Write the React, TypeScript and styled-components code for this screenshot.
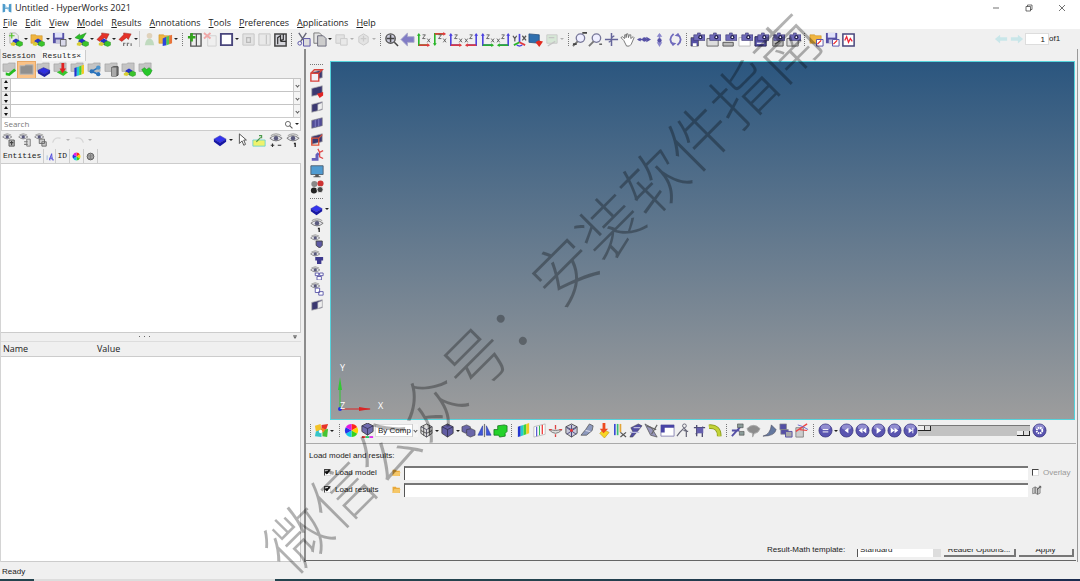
import React from "react";
import styled, { createGlobalStyle } from "styled-components";

const Global = createGlobalStyle`
  *, *::before, *::after { box-sizing: border-box; }
  body { margin: 0; background: #f0f0f0; color: #222; font: 9px/12px "Open Sans", "Noto Sans", sans-serif; }
  button, input, select { font: inherit; color: inherit; border-radius: 0; }
`;

/* ---------- page frame ---------- */
const Page = styled.div`
  position: relative;
  display: flex;
  flex-direction: column;
  min-height: 100vh;
  overflow: hidden;
`;
const TitleBar = styled.header`
  display: flex;
  align-items: center;
  gap: 3px;
  height: 15px;
  padding: 0 10px 0 2px;
  background: #fff;
`;
const Title = styled.h1`
  flex: 1;
  margin: 0;
  font-size: 9px;
  font-weight: 400;
`;
const WindowButtons = styled.div`
  display: flex;
  gap: 17px;
`;
const MenuBar = styled.nav`
  display: flex;
  gap: 8px;
  height: 14px;
  padding: 1px 3px 0;
  align-items: center;
  background: #fff;
`;
const MenuItem = styled.button`
  padding: 0;
  border: 0;
  background: none;
  white-space: nowrap;
  &::first-letter { text-decoration: underline; }
`;
const Bar = styled.div<{ $h: number; $start?: number }>`
  display: flex;
  flex: none;
  align-items: center;
  height: ${(p) => p.$h}px;
  padding-left: ${(p) => p.$start ?? 0}px;
`;
const Spacer = styled.div`
  flex: 1;
`;
const IconButton = styled.button<{ $w?: number; $active?: boolean; $dim?: boolean }>`
  display: flex;
  flex: none;
  align-items: center;
  justify-content: center;
  width: ${(p) => p.$w ?? 16}px;
  height: 16px;
  padding: 0;
  border: 0;
  background: ${(p) => (p.$active ? "#f9c288" : "none")};
  outline: ${(p) => (p.$active ? "1px solid #e8a866" : "none")};
  opacity: ${(p) => (p.$dim ? 0.35 : 1)};
`;
const CaretBox = styled.span<{ $w: number; $dim?: boolean }>`
  display: flex;
  flex: none;
  justify-content: center;
  width: ${(p) => p.$w}px;
  opacity: ${(p) => (p.$dim ? 0.3 : 1)};
  &::after {
    content: "";
    border: 2px solid transparent;
    border-top-color: #222;
    margin-top: 2px;
  }
`;
const Grip = styled.span<{ $w?: number }>`
  display: flex;
  flex: none;
  justify-content: center;
  width: ${(p) => p.$w ?? 6}px;
  height: 13px;
  &::after {
    content: "";
    border-left: 1px dotted #777;
  }
`;
const HGrip = styled.span`
  flex: none;
  width: 13px;
  height: 1px;
  margin: 3px 0 2px;
  border-top: 1px dotted #777;
`;
const Separator = styled.span`
  flex: none;
  width: 2px;
  height: 16px;
  border-left: 1px solid #ccc;
`;
const PageField = styled.input`
  width: 24px;
  height: 12px;
  padding: 0 3px;
  border: 1px solid #ddd;
  background: #fff;
  text-align: right;
  font: 8px/10px "Liberation Sans", Arial, sans-serif;
`;
const PageTotal = styled.label`
  width: 31px;
  font: 8px/10px "Liberation Sans", Arial, sans-serif;
`;
const Main = styled.main`
  display: flex;
  flex: 1;
`;

/* ---------- browser panel ---------- */
const Browser = styled.aside`
  display: flex;
  flex-direction: column;
  flex: 0 0 304px;
  padding-right: 3px;
  border-left: 1px solid #d4d4d4;
`;
const Tabs = styled.div`
  display: flex;
  height: 12px;
  padding-top: 1px;
  font: 8px/11px "Liberation Mono", monospace;
`;
const Tab = styled.button<{ $on?: boolean }>`
  padding: 0 4px 0 1px;
  margin-right: 2px;
  border: 0;
  border-right: ${(p) => (p.$on ? "1px solid #ccc" : "0")};
  background: ${(p) => (p.$on ? "#f8f8f8" : "none")};
`;
const PickRow = styled.div`
  display: flex;
  height: 13px;
  border: 1px solid #c4c4c4;
  border-bottom: 0;
  background: #fff;
`;
const Stepper = styled.button`
  display: flex;
  flex-direction: column;
  align-items: center;
  justify-content: space-between;
  width: 9px;
  padding: 1px 0;
  border: 0;
  border-right: 1px solid #c4c4c4;
  background: #eee;
  &::before { content: ""; border: 2px solid transparent; border-top: 0; border-bottom: 3px solid #111; }
  &::after { content: ""; border: 2px solid transparent; border-bottom: 0; border-top: 3px solid #111; }
`;
const PickSelect = styled.select`
  flex: 1;
  min-width: 0;
  appearance: none;
  border: 0;
  background: none;
`;
const DropEdge = styled.span`
  display: flex;
  align-items: center;
  justify-content: center;
  width: 7px;
  border-left: 1px solid #ccc;
  background: #f4f4f4;
  &::after { content: ""; width: 3px; height: 3px; border: solid #555; border-width: 0 1px 1px 0; transform: rotate(45deg); }
`;
const SearchRow = styled.div`
  display: flex;
  align-items: center;
  height: 14px;
  border: 1px solid #ccc;
  background: #fff;
`;
const SearchInput = styled.input`
  flex: 1;
  min-width: 0;
  padding: 0 2px;
  border: 0;
  background: none;
  font-size: 8px;
  &::placeholder { color: #777; opacity: 1; }
`;
const ColumnTable = styled.table<{ $mono?: boolean }>`
  width: 100%;
  height: 14px;
  flex: none;
  table-layout: fixed;
  border-collapse: collapse;
  font: ${(p) => (p.$mono ? '8px/12px "Liberation Mono", monospace' : '9px/12px "Open Sans", sans-serif')};
  th {
    height: 14px;
    padding: 0 0 0 2px;
    font-weight: 400;
    text-align: left;
    border-right: ${(p) => (p.$mono ? "1px solid #ccc" : "0")};
  }
  th:last-child { border: 0; }
  svg { display: block; }
`;
const Th = styled.th<{ $w?: number }>`
  width: ${(p) => (p.$w ? p.$w + "px" : "auto")};
`;
const Blank = styled.div<{ $grow: number }>`
  flex: ${(p) => p.$grow} 0 0;
  border: 1px solid #ccc;
  border-left: 0;
  background: #fff;
`;
const Splitter = styled.div`
  display: flex;
  align-items: center;
  height: 9px;
  padding-right: 3px;
  border-bottom: 1px solid #ddd;
`;
const Dots = styled.span`
  display: flex;
  justify-content: space-between;
  flex: 0 0 11px;
  &::before, &::after { content: ""; width: 1px; height: 1px; background: #666; }
`;
const Dot = styled.span`
  width: 1px;
  height: 1px;
  background: #666;
`;
const SplitHalf = styled.div`
  display: flex;
  flex: 1;
  justify-content: flex-end;
`;

/* ---------- work area ---------- */
const Work = styled.section`
  display: flex;
  flex-direction: column;
  flex: 1;
  min-width: 0;
  margin-right: 2px;
  border-left: 2px solid #8c8c8c;
  border-right: 1px solid #999;
`;
const Stage = styled.div`
  display: flex;
  flex: 1;
  padding: 12px 2px 0 0;
`;
const SideTools = styled.div`
  display: flex;
  flex-direction: column;
  align-items: center;
  width: 24px;
  padding-right: 3px;
`;
const SideRow = styled.div`
  display: flex;
  align-items: center;
  padding-left: 4px;
`;
const Viewport = styled.div`
  display: flex;
  flex: 1;
  align-items: flex-end;
  border: 1px solid #55d3dc;
  background: linear-gradient(#2b567f, #9d9d9d);
  svg { display: block; }
`;
const ColorSelect = styled.select`
  appearance: none;
  width: 37px;
  height: 13px;
  padding: 0 0 0 2px;
  border: 1px solid #ddd;
  border-right: 0;
  background: #fff;
  font: 8px/11px "Liberation Sans", Arial, sans-serif;
`;
const SelectEdge = styled(DropEdge)`
  width: 6px;
  height: 13px;
`;
const Sliders = styled.div`
  display: flex;
  flex-direction: column;
  width: 112px;
  height: 11px;
  border-top: 1px solid #777;
  background: #c2c2c2;
`;
const Range = styled.input`
  appearance: none;
  width: 100%;
  height: 5px;
  margin: 0;
  background: none;
  &::-webkit-slider-thumb {
    appearance: none;
    width: 13px;
    height: 5px;
    border: solid #222;
    border-width: 0 1px 1px 0;
    background: linear-gradient(90deg, #eee 6px, #444 6px, #444 7px, #ddd 7px);
  }
`;
const Panel = styled.form`
  display: flex;
  flex-direction: column;
  height: 118px;
  margin: 2px 1px 1px 0;
  padding: 6px 2px 0 3px;
  border-top: 1px solid #aaa;
  border-bottom: 1px solid #666;
  font: 8px/12px "Liberation Sans", Arial, sans-serif;
`;
const PanelTitle = styled.h2`
  margin: 0 0 2px;
  font: inherit;
`;
const LoadRow = styled.div`
  display: flex;
  align-items: center;
  height: 17px;
  padding-left: 15px;
`;
const Check = styled.input`
  appearance: none;
  display: flex;
  align-items: center;
  justify-content: center;
  flex: none;
  width: 7px;
  height: 7px;
  margin: 0 4px 0 0;
  border: 1px solid #444;
  border-right-color: #ddd;
  border-bottom-color: #ddd;
  background: #fff;
  &:checked::before {
    content: "";
    width: 5px;
    height: 3px;
    margin-top: -2px;
    border: solid #111;
    border-width: 0 0 2px 2px;
    transform: rotate(-45deg);
  }
`;
const LoadLabel = styled.label`
  width: 53px;
`;
const PathInput = styled.input`
  flex: 1;
  min-width: 0;
  height: 14px;
  border: 0;
  border-top: 2px solid #777;
  border-left: 1px solid #555;
  background: #fff;
`;
const RowEnd = styled.div`
  display: flex;
  align-items: center;
  width: 46px;
  padding-left: 4px;
  color: #999;
`;
const ActionRow = styled.div`
  display: flex;
  align-items: flex-end;
  justify-content: flex-end;
  margin-bottom: 3px;
`;
const TemplateLabel = styled.label`
  width: 90px;
  margin-bottom: 1px;
`;
const Cut = styled.div`
  display: flex;
  align-items: flex-end;
  gap: 3px;
  height: 8px;
  overflow: hidden;
`;
const TemplateSelect = styled.select`
  appearance: none;
  width: 84px;
  height: 14px;
  padding: 0 2px;
  border: 0;
  border-left: 1px solid #555;
  border-right: 8px solid #ddd;
  background: #fff;
`;
const PushButton = styled.button<{ $w: number }>`
  width: ${(p) => p.$w}px;
  height: 15px;
  padding: 3px 0 0;
  border: solid #777;
  border-width: 0 2px 2px 0;
  background: #f0f0f0;
  line-height: 10px;
`;
const StatusBar = styled.footer`
  height: 17px;
  padding: 4px 2px;
  font: 8px/12px "Liberation Sans", Arial, sans-serif;
`;
const DesktopEdge = styled.div`
  height: 2px;
  background: linear-gradient(90deg, #24434e 34px, #ddd 34px, #ddd 275px, #24434e 275px, #24434e 50%, #1c2c50);
`;
const Watermark = styled.div`
  position: absolute;
  left: 50%;
  top: 50%;
  transform: translate(-50%, -50%) rotate(-45deg);
  color: rgba(0, 0, 0, 0.3);
  font: 300 63px/64px "Noto Sans CJK SC", sans-serif;
  white-space: nowrap;
  pointer-events: none;
`;

/* ---------- drawings, all on a 16-unit grid ---------- */
const P = "#5550a5";
const path = (d: string, fill: string, stroke = "none", w = 1) => <path d={d} fill={fill} stroke={stroke} strokeWidth={w} />;
const line = (d: string, c: string, w = 1.3) => path(d, "none", c, w);
const blocks = (
  <>
    {path("M5 9l3.500-2 3.500 2v3l-3 2-4-2z", "#2432c8")}
    {path("M9 11l3-1.500 3.500 1.500v3l-3 1.500-3.500-1.500z", "#3ac42c", "#1f7d18", 0.4)}
    {path("M3 12l3-1.500 3 2-2.500 2.500-3.500-1z", "#d8cf36")}
  </>
);
const folder = path("M1 3h5l1 1h6v8H1z", "#f0b540", "#c98f26", 0.6);
const disk = (
  <>
    {path("M1 1h12v11H1z", P)}
    {path("M3 1h8v5H3z", "#dfe0fa")}
    {path("M4 8h6v4H4z", "#c4c4dd")}
  </>
);
const camera = (
  <>
    {path("M4 3h4V1h3v2h5v6H4z", "#706bb9", "#37336e", 0.6)}
    <circle cx="11" cy="5.500" r="2.200" fill="#23204f" />
    <circle cx="11" cy="5.500" r="0.900" fill="#fff" />
  </>
);
const greyFolder = path("M1 2h5l1-1h7v9H1z", "#c4c4c4", "#999", 0.6);
const eye = (
  <>
    {path("M1 6q6-6 14 0q-7 6-14 0z", "#e4e4ea", "#777", 1.1)}
    <circle cx="8" cy="6" r="2.500" fill="#59597c" />
    {line("M2 3q6-4 12 0", "#888", 1)}
  </>
);
const smallEye = <g transform="scale(.75)">{eye}</g>;
const slab = path("M2 5l12-3v9L2 14z", "#3b3870", "#aaa", 0.8);
const ball = (
  <>
    <circle cx="8" cy="8" r="7" fill="#5a55b0" stroke="#3b377f" strokeWidth="0.800" />
    <ellipse cx="8" cy="4.500" rx="5" ry="2.800" fill="#a8a5de" opacity="0.700" />
  </>
);
const wheel = (
  <>
    {["#ff2a1a", "#ffd400", "#37d21b", "#14c9e6", "#2634e8", "#e11be0"].map((c, i) => (
      <path key={c} d="M8 8V1A7 7 0 0 1 14.060 4.500z" fill={c} transform={`rotate(${i * 60} 8 8)`} />
    ))}
  </>
);
const cube = (c: string) => (
  <>
    {path("M8 1l6 3v7l-6 4-6-4V4z", c, "#333", 0.8)}
    {line("M2 4l6 3 6-3M8 7v8", "#26243f", 0.7)}
  </>
);
const axes = (v: string, h: string, flipX = false, flipY = false) => (
  <>
    <g transform={`translate(${flipX ? 16 : 0} ${flipY ? 16 : 0}) scale(${flipX ? -1 : 1} ${flipY ? -1 : 1})`}>
      {line("M3 3v11h9", v, 1.7)}
      {path("M1 4l2-3 2 3z", v)}
      {line("M3 14h10", h, 1.7)}
      {path("M12 12l3 2-3 2z", h)}
    </g>
    {line(flipX ? "M6 3h3l-3 4h3M1 7l3 4M4 7l-3 4" : "M7 3h3l-3 4h3M12 7l3 4M15 7l-3 4", "#555", 0.9)}
  </>
);
const rainbow = (
  <>
    {path("M2 4l3-1v11l-3 1z", "#2335cf")}
    {path("M5 3l3-1v11l-3 1z", "#24c9d2")}
    {path("M8 2l3-1v11l-3 1z", "#3fd43a")}
    {path("M11 1l3-1v11l-3 1z", "#f2cb24")}
  </>
);
const mag = (
  <>
    <circle cx="9" cy="6.500" r="4.500" fill="#eef" stroke="#777799" strokeWidth="1.400" />
    {line("M6 10l-5 5", "#777", 2)}
  </>
);

const glyphs: Record<string, React.ReactNode> = {
  new: <>{path("M2 1h6l3 3v8H2z", "#ececec", "#999", 0.7)}{line("M4 1v6M1 4h6", "#53c32b")}{blocks}</>,
  open: <>{folder}{blocks}</>,
  save: <>{disk}{path("M9 8h6v7H9z", "#d8d8e8", "#444", 0.8)}</>,
  import: <>{path("M1 6l5-4v2l7-3-5 8-3 1 1-2z", "#2bbd26", "#178315", 0.5)}{blocks}</>,
  export: <>{path("M1 8l5-5V1l8 1-3 6-2-2-5 4z", "#e53229", "#982019", 0.5)}{blocks}</>,
  exportDoc: <>{path("M1 8l5-5V1l8 1-3 6-2-2-5 4z", "#e53229", "#982019", 0.5)}{line("M6 15v-3h2M10 15v-3h2M14 12v3", "#777")}</>,
  user: <><circle cx="8" cy="4" r="3" fill="#c39b5c" />{path("M3 14q1-7 5-7t5 7z", "#69b365")}</>,
  session: <>{folder}{path("M5 7l4-2v9l-4 1z", "#2c45dd")}{path("M9 5l3-1v9l-3 1z", "#4cc955")}{path("M12 4l3-1v9l-3 1z", "#e8733a")}</>,
  addPage: <>{path("M4 2h11v13H4z", "#eee", "#555", 1.4)}{line("M10 2v13", "#555")}{line("M5 1v9M1 5.500h8", "#33a51d", 2.6)}</>,
  removePage: <>{path("M5 4h9v11H5z", "#eee", "#999")}{line("M1 1l7 6M8 1L1 7", "#e22", 2)}</>,
  layout: path("M2 2h12v12H2z", "#fff", "#49467c", 2),
  copyPage: <>{path("M2 2h12v12H2z", "#ccc", "#777")}{line("M6 6h4v5H6z", "#555")}</>,
  pastePage: <>{path("M2 2h12v12H2z", "#ddd", "#777")}{line("M10 3v10", "#777")}</>,
  swap: <>{path("M2 2h12v13H2z", "#d6d6dc", "#444", 1.6)}{line("M5 13V6l3-2v5l3-1V2M8 10h6", "#333")}</>,
  cut: <>{line("M3 1l6 9M11 1L5 10", "#667", 1.5)}<circle cx="4" cy="12" r="2" fill="none" stroke={P} />{path("M8 7h7v8H8z", "#ddd", P)}</>,
  copy: <>{path("M2 1h6l2 2v9H2z", "#e4e4e4", "#777")}{path("M6 4h6l3 3v8H6z", "#ccc", "#667")}</>,
  paste: <>{path("M2 3h9v9H2z", "#ccc", "#888")}{path("M7 7h7v7H7z", "#ddd", "#888")}</>,
  overlay: <>{path("M3 5l5-3 5 3v6l-5 3-5-3z", "#ccc", "#888")}{line("M8 4v6M5 7h6", "#888")}</>,
  fit: <><circle cx="7" cy="7" r="5" fill="#ccd" stroke="#555" strokeWidth="1.500" />{line("M3 7h8M7 3v8M11 11l4 4", "#444", 1.6)}</>,
  back: path("M1 8l7-7v4h7v6H8v4z", "#817cc5", "#a9a7c9", 0.9),
  xy: axes("#27b526", "#e2393b"),
  xyBack: axes("#27b526", "#e2393b", false, true),
  zx: axes("#4b41df", "#e2393b"),
  xz: axes("#4b41df", "#e2393b", true),
  zy: axes("#4b41df", "#27b526"),
  yz: axes("#4b41df", "#27b526", true),
  iso: <>{line("M8 2v9", "#4b41df", 1.8)}{line("M8 11l-6 3", "#27b526", 1.8)}{line("M8 11l6 3", "#e2393b", 1.8)}{line("M1 4l2 3 2-3M3 7v3M11 4l4 5M15 4l-4 5", "#555")}{line("M5 14l3 1 3-1", "#4b41df")}</>,
  view: <>{path("M1 2l11 1v9L1 11z", "#2f6fae", "#234c79", 0.8)}{path("M8 11l3-2 5 1-4 6z", "#e22b20")}</>,
  report: <>{path("M3 3h11v9H3z", "#a8d8a8", "#888")}{line("M4 15l8-5M5 6h6", "#777")}</>,
  zoomIn: <>{mag}{line("M11 1h5M1 13h4", "#444", 1.8)}</>,
  zoom: <>{mag}{line("M12 13h3", "#444")}</>,
  pan: <>{line("M1 8h14M8 1v14", "#65659a", 1.6)}{line("M11 4l-3 2M5 11l3-2", "#65659a")}</>,
  hand: path("M4 9L1 6l1.500-1L5 7V3h1.500v3L7 2h1.500l.5 4 1-3h1.500v4L14 5l1 1-3 7-2 2H7z", "#fff", "#666", 0.9),
  spinH: <>{line("M2 8h12", P, 1.6)}{path("M11 5l5 3-5 3zM5 6L1 8l4 2z", P)}<circle cx="9" cy="8" r="2.300" fill={P} /></>,
  spinV: <>{line("M8 2v12", "#8b87cc", 1.6)}{path("M5 5l3-4 3 4zM5 11l3 5 3-5z", "#8b87cc")}<circle cx="8" cy="9" r="2.300" fill={P} /></>,
  spin: <>{line("M6 2q-7 6 0 12M10 2q7 6 0 12", "#706bbd", 2)}{path("M4 11l5 1-4 3zM12 5L7 4l4-3z", "#706bbd")}</>,
  cam1: <>{path("M1 6h8v9H1z", P, "#333", 0.6)}{camera}{path("M3 12h4v3H3z", "#fff")}</>,
  cam2: <>{path("M1 7h12v8H1z", "#ddd", "#666")}{camera}</>,
  cam3: <>{path("M1 11h11v4H1z", "#bbb", "#555")}{camera}</>,
  cam4: <>{path("M1 6h12v9H1z", "#fff", "#bbb")}{camera}</>,
  cam5: <>{path("M1 5h12v10H1z", P, "#26244f")}{camera}{line("M3 12h8", "#fff")}</>,
  cam6: <>{path("M3 6h11v9H3z", "#bbb", "#555")}{camera}{line("M5 13l6-4", "#444")}</>,
  folderPic: <>{folder}{path("M8 8h7v7H8z", "#fff", P)}{line("M9 13l4-4", "#e22")}</>,
  savePic: <>{disk}{path("M8 8h7v7H8z", "#fff", P)}{line("M9 13l4-4", "#e22")}</>,
  chart: <>{path("M2 2h12v13H2z", "#fff", "#49467c", 1.6)}{line("M4 9l2-4 2 6 2-4 2 3", "#e23")}</>,
  prev: path("M1 8l6-5v3h8v4H7v3z", "#c9e6e9"),
  next: path("M15 8L9 3v3H1v4h8v3z", "#c9e6e9"),

  fCheck: <>{greyFolder}{path("M4 11l3 1 6-5 2 2-7 6-4-1z", "#27bd22")}</>,
  fGrey: path("M1 4h5l1-1h8v10H1z", "#8f8f8f", "#bbb"),
  fBlue: <>{greyFolder}{path("M2 9l6-3 7 3-6 4z", "#2f2fe0", "#1a1a9b", 0.6)}{path("M2 9v3l7 4 6-4V9l-6 4z", "#2020a6")}</>,
  fLoad: <>{greyFolder}{path("M4 11l6-3 6 3-5 4z", "#38c530")}{path("M9 1h3v6h2l-4 5-3-5h2z", "#e12222")}</>,
  fRain: <>{greyFolder}<g transform="translate(3 3) scale(.85)">{rainbow}</g></>,
  fShare: <>{greyFolder}{line("M5 10l7-4M5 10l7 3", "#2b73bb", 1.8)}<circle cx="5" cy="10" r="2.300" fill="#2b73bb" /><circle cx="12" cy="6" r="2.300" fill="#4b93cc" /><circle cx="12" cy="13" r="2.300" fill="#2b73bb" /></>,
  fBook: <>{greyFolder}{path("M8 6l2-1h5v9l-2 1H8z", "#777", "#444")}{path("M8 6h5v9H8z", "#aaa")}</>,
  fParts: <>{greyFolder}{blocks}</>,
  fGreen: <>{greyFolder}{path("M4 8l3-2 2 2 3-2 3 3-2 4-3 2-3-2z", "#27c72a", "#158415", 0.5)}</>,

  treeEye: <>{smallEye}{path("M8 8h6v7H8z", "#bbb", "#555")}{line("M9 11h4M11 9v5", "#444")}</>,
  treeEye2: <>{smallEye}{path("M10 7h4v8h-4z", "#ddd", "#777")}{line("M7 10h4M7 13h4", "#777")}</>,
  treeEye3: <>{smallEye}{path("M6 7h6v5H6zM9 10h5v5H9z", "#ccc", "#666")}</>,
  undo: line("M3 11q2-7 9-5", "#aaa", 1.5),
  redo: line("M4 6q7-2 9 5", "#aaa", 1.5),
  block: <>{path("M1 7l7-4 7 4-7 4z", "#3434ee", "#1c1c99", 0.5)}{path("M1 7v3l7 5 7-5V7l-7 4z", "#1717a4")}</>,
  cursor: path("M5 1v11l3-3 2 5 2-1-2-5h3z", "#fff", "#444"),
  highlight: <>{path("M1 8h14v7H1z", "#eff26b", "#69d3cf", 1)}{line("M5 10l5-5M8 3h3v3", "#4a994a")}</>,
  eyePM: <>{eye}{line("M2 14h4M4 12v4M10 14h4", "#333")}</>,
  eye1: <>{eye}{line("M9 12h1.500v4", "#222", 1.5)}</>,
  search: <><circle cx="7" cy="7" r="4.500" fill="none" stroke="#555" strokeWidth="1.500" />{line("M10 10l5 5", "#555", 1.8)}</>,
  info: <>{line("M10 3L6 14h2M10 3l1 11h3M6 11h6", "#4d48dc", 1.7)}{line("M2 6v8", "#9bd", 1.6)}</>,
  wheel,
  sphere: <><circle cx="8" cy="8" r="6" fill="#aaa" stroke="#555" strokeWidth="1.600" />{line("M3 7h10M8 3v10M5 11h6", "#777")}</>,
  pin: <>{path("M3 6h10l-5 7z", "#666")}{line("M3 4h10", "#555", 1.6)}</>,

  slabRed: <>{slab}{path("M1 6h9v9H1z", "#f3eef4")}{line("M1 6h9v9H1zM1 6l4-4h9l-4 4", "#d9433b", 1.6)}</>,
  slabCut: <>{slab}{path("M8 11l7-2v4l-4 3z", "#e02424")}</>,
  slabHalf: <>{slab}{path("M9 5l5-2v7l-5 2z", "#eee", "#bbb", 0.7)}</>,
  slab: <>{path("M2 5l12-3v9L2 14z", "#514c97", "#777", 0.7)}{line("M6 4v9M10 3v9", "#8e8bcf", 0.9)}</>,
  slabBox: <>{slab}{line("M2 7h8v8H2zM10 7l4-4", "#e05338", 1.5)}</>,
  hook: <>{line("M2 13h6V8l2-2", "#655fba", 3.4)}{line("M9 1l2 4 4-2M11 5v5l4 2", "#df4747", 1.4)}</>,
  monitor: <>{path("M1 2h14v10H1z", "#4f9bd1", "#4d5d6c")}{path("M6 12h4v2h2v1H4v-1h2z", "#555")}</>,
  balls: <><circle cx="5" cy="4.500" r="3.500" fill="#888" /><circle cx="12" cy="4" r="3.500" fill="#c33" /><circle cx="4.500" cy="12" r="3.500" fill="#222" /><circle cx="11.500" cy="11" r="3.500" fill="#444" stroke="#eee" /></>,
  eyeA: <>{smallEye}{path("M7 8h7v5l-3 3-4-3z", "#5d59a4", "#444")}</>,
  eyeB: <>{smallEye}{path("M6 8h9v4h-2v4H8v-4H6z", "#3d398e")}</>,
  eyeC: <>{smallEye}{path("M6 8h4v3H6zM11 8h4v3h-4zM8 12h5v4H8z", "#fff", P)}</>,
  eyeD: <>{smallEye}{path("M6 7h5v5H6zM10 11h5v4h-5z", "#fff", P)}</>,

  contourMix: <>{path("M1 3l6-2 1 7-6 1z", "#f2c227")}{path("M8 2l7-1-2 6-5 1z", "#e63428")}{path("M2 9l6-2v8l-7-1z", "#36c5c9")}{path("M9 8l6-2-1 9-5-1z", "#48c433")}{path("M9 5l3 2-2 3-4-1z", "#f28a1e")}<circle cx="7" cy="9" r="1.800" fill="#fff" /></>,
  cubeTint: <>{path("M8 0l6 3v6l-6 4-6-4V3z", "#706cae", "#333", 0.8)}{line("M2 3l6 3 6-3M8 6v7", "#26243f", 0.7)}{path("M2 14h4v2H2z", "#e33")}{path("M6 14h4v2H6z", "#2c6")}{path("M10 14h4v2h-4z", "#d3e")}</>,
  cubeWire: <>{cube("#ddd")}{line("M5 2.500v11M11 2.500v11M2 8l6 3 6-3", "#444", 0.9)}</>,
  cubeSolid: cube("#625da3"),
  cubes: <>{path("M1 4l5-2 4 2v5l-5 2-4-2z", "#6a66a8", "#333", 0.6)}{path("M6 7l5-1 4 2v5l-5 2-4-2z", "#6a66a8", "#333", 0.6)}</>,
  mirror: <>{path("M1 13L6 3v10zM15 13L10 3v10z", "#3f56d8", "#2333a0", 0.6)}{line("M8 1v14", "#777")}</>,
  greenBlocks: path("M1 7h4V3l7-1 3 1v6l-2 2v3l-6 1-1-2H1z", "#24d22a", "#14701a", 0.8),
  contour: rainbow,
  contour2: <>{path("M2 4l12-3v11L2 15z", "#fff", "#999", 0.6)}{line("M5 4v10", "#44c", 1.2)}{line("M8 3v10", "#3b5", 1.2)}{line("M11 2v10", "#e44", 1.5)}</>,
  deform: <>{path("M1 7q7 8 14 0q-7 2-14 0z", "#ddd", "#777")}{line("M1 7h3M12 7h3M8 12v3M8 2v5", "#d44", 1.4)}</>,
  iso3: <>{cube("#c8c8d8")}{line("M3 5l10 7M13 5L3 12M8 2v12", "#4d4980", 1)}<circle cx="8" cy="8" r="1.500" fill="#e33" /></>,
  beam: <>{path("M1 13h6l6-5 1-5-4-2-4 6z", "#8d99bd", "#555", 0.8)}{line("M6 8l5 1", "#dde", 1.2)}</>,
  arrowLoad: <>{path("M4 11l4-4 6 3-5 6z", "#f7d625", "#bb8f11", 0.6)}{path("M7 0h3v6h3l-5 5-4-5h3z", "#ed4b20")}</>,
  stripesCut: <>{line("M3 1v12", "#3b4bd5", 1.8)}{line("M6 1v12", "#3bbd72", 1.8)}{line("M9 1v9", "#e2a538", 1.8)}{line("M9 10l6 5M15 10l-6 5", "#555")}</>,
  trace: <>{path("M3 5l8-4 4 2-4 5-6 7H2l3-6z", "#524ea2", "#333", 0.5)}{line("M2 10h10M6 5h7", "#bbd")}</>,
  vec: <>{path("M1 1l7 4 6 10-7-2z", "#9795bb", "#555", 0.8)}{line("M3 3l10 4M14 2L8 12", "#666")}</>,
  tableIcon: <>{path("M1 2h14v12H1z", "#fff", "#8b88b5")}{path("M1 2h14v3H1zM1 5h4v5H1z", "#4743a4")}</>,
  run: <>{line("M8 5l3 3v7M8 6l-4 4-3 4M8 8l5 1", "#667", 1.3)}<circle cx="9" cy="3" r="2" fill="none" stroke="#667" /></>,
  cross: <>{line("M5 2v12M2 5h12M4 12l8-8M11 6v9", "#4c4a6e", 1.4)}{path("M5 5h7v6H5z", "#655fae")}</>,
  pipe: <>{line("M1 4q11-1 11 10", "#8c9c1e", 5)}{line("M1 4q11-1 11 10", "#c3d336", 3)}</>,
  note: <>{line("M2 8h8M2 14l10-11", P, 2)}{path("M8 1h6v4H8zM10 9h5v4h-5z", "#8b9c99", "#444", 0.6)}</>,
  bubble: path("M1 6q7-7 14 0q-2 5-6 5l-2 4v-4Q2 10 1 6z", "#8d8d8d", "#aaa"),
  swoosh: path("M1 14q8-2 9-12l5 5q-1 7-14 7z", "#64789f", "#445", 0.6),
  stack: <>{path("M2 1h7v6H2zM3 7h8v5H3z", P, "#888", 0.7)}{path("M8 9h7v6H8z", "#aaa", P)}</>,
  plot: <>{path("M2 5h8v10H2z", "#ccc", "#888")}{line("M2 9L14 1", "#e44", 1.5)}{line("M4 2q5 1 11 5", "#66c", 1)}{line("M6 7l8 1", "#e44")}</>,
  ballMenu: <>{ball}{line("M5 7h6M5 9.500h6", "#fff", 1)}</>,
  ballFirst: <>{ball}{path("M10 5v6L6 8z", "#fff")}</>,
  ballRew: <>{ball}{path("M8 5v6L4 8zM12 5v6L8 8z", "#fff")}</>,
  ballPlay: <>{ball}{path("M6 4.500v7l5-3.500z", "#fff")}</>,
  ballFwd: <>{ball}{path("M4 5v6l4-3zM8 5v6l4-3z", "#fff")}</>,
  ballLast: <>{ball}{path("M6 5v6l4-3zM10 5h1v6h-1z", "#fff")}</>,
  ballGear: <>{ball}<circle cx="8" cy="8" r="3" fill="none" stroke="#fff" strokeWidth="2" strokeDasharray="1.600 .8" /></>,
  folder: <>{path("M1 3h6l1 2h6v9H1z", "#e9a93a")}{path("M1 14l3-7h11l-2 7z", "#f5c768")}</>,
  map: <>{path("M1 5l4-2 4 2 4-2v10l-4 2-4-2-4 1z", "#ccc", "#666")}{line("M5 3v10M9 5v10M8 8l6-6M11 2h3v3", "#555")}</>,
  logo: <>{path("M1 1l4 1v5h6V2l4-1v14l-4-1V9H5v5l-4 1z", "#4e9bcb")}{path("M5 2l3 5H5zM11 14L8 9h3z", "#9cc9e4")}</>,
  min: line("M2 8h12", "#333", 1.4),
  max: line("M2 5h9v9H2zM5 5V2h9v9h-3", "#333", 1.4),
  close: line("M2 2l12 12M14 2L2 14", "#333", 1.4),
};

const Icon = ({ name, size = 15 }: { name: string; size?: number }) => (
  <svg width={size} height={size} viewBox="0 0 16 16" aria-hidden="true">
    {glyphs[name]}
  </svg>
);

type ToolsProps = { items: string; caret?: number; w?: number; size?: number; active?: string };
/* Items are icon names; a trailing "+" adds a drop-down caret, "~" shows the tool disabled. */
const Tools = ({ items, caret = 6, w, size = 15, active }: ToolsProps) => (
  <>
    {items.split(" ").map((raw, i) => {
      const name = raw.replace(/[+~]/g, "");
      const dim = raw.includes("~");
      return (
        <React.Fragment key={i}>
          <IconButton type="button" aria-label={name} $w={w} $dim={dim} $active={active === name}>
            <Icon name={name} size={size} />
          </IconButton>
          {raw.includes("+") && <CaretBox $w={caret} $dim={dim} />}
        </React.Fragment>
      );
    })}
  </>
);

const menus = ["File", "Edit", "View", "Model", "Results", "Annotations", "Tools", "Preferences", "Applications", "Help"];

export default function App() {
  return (
    <>
      <Global />
      <Page>
        <TitleBar>
          <Icon name="logo" size={10} />
          <Title>Untitled - HyperWorks 2021</Title>
          <WindowButtons>
            <Tools items="min max close" size={8} />
          </WindowButtons>
        </TitleBar>
        <MenuBar>
          {menus.map((m) => (
            <MenuItem key={m} type="button">{m}</MenuItem>
          ))}
        </MenuBar>
        <Bar $h={20} $start={1}>
          <Grip />
          <Tools items="new+ open+ save+ import+ export+ exportDoc+" />
          <Separator />
          <Tools items="user~ session+" />
          <Grip $w={7} />
          <Tools items="addPage removePage~ layout+ copyPage~ pastePage~ swap" />
          <Grip $w={7} />
          <Tools items="cut copy+ paste~+ overlay~+" />
          <Grip />
          <Tools items="fit back xy xyBack zx xz zy yz iso view report~+" />
          <Grip />
          <Tools items="zoomIn zoom pan hand spinH spinV spin" />
          <Grip />
          <Tools items="cam1 cam2 cam3 cam4 cam5 cam6 cam2" />
          <Grip $w={7} />
          <Tools items="folderPic savePic chart" />
          <Spacer />
          <Tools items="prev next" size={14} />
          <PageField id="page" defaultValue="1" />
          <PageTotal htmlFor="page">of1</PageTotal>
        </Bar>

        <Main>
          <Browser>
            <Tabs>
              <Tab type="button">Session</Tab>
              <Tab type="button" $on>Results×</Tab>
            </Tabs>
            <Bar $h={17}>
              <Tools items="fCheck fGrey fBlue fLoad fRain fShare fBook fParts fGreen" w={17} active="fGrey" />
            </Bar>
            {["Model", "Subcase", "Simulation"].map((n) => (
              <PickRow key={n}>
                <Stepper type="button" aria-label={n + " step"} />
                <PickSelect aria-label={n} />
                <DropEdge />
              </PickRow>
            ))}
            <SearchRow>
              <SearchInput placeholder="Search" aria-label="Search" />
              <Icon name="search" size={9} />
              <CaretBox $w={7} />
            </SearchRow>
            <Bar $h={18}>
              <Tools items="treeEye treeEye2 treeEye3 undo~+ redo~+" size={14} />
              <Spacer />
              <Tools items="block+" caret={5} size={14} />
              <Tools items="cursor highlight eyePM eye1" w={17} size={14} />
            </Bar>
            <ColumnTable $mono>
              <thead>
                <tr>
                  <Th $w={42}>Entities</Th>
                  <Th $w={12}><Icon name="info" size={9} /></Th>
                  <Th $w={14}>ID</Th>
                  <Th $w={14}><Icon name="wheel" size={9} /></Th>
                  <Th $w={14}><Icon name="sphere" size={9} /></Th>
                  <Th />
                </tr>
              </thead>
            </ColumnTable>
            <Blank $grow={170} />
            <Splitter>
              <SplitHalf><Dots><Dot /></Dots></SplitHalf>
              <SplitHalf><Icon name="pin" size={6} /></SplitHalf>
            </Splitter>
            <ColumnTable>
              <thead>
                <tr>
                  <Th $w={94}>Name</Th>
                  <Th>Value</Th>
                </tr>
              </thead>
            </ColumnTable>
            <Blank $grow={207} />
          </Browser>

          <Work>
            <Stage>
              <SideTools>
                <HGrip />
                <Tools items="slabRed slabCut slabHalf slab slabBox hook monitor balls" size={14} />
                <HGrip />
                <SideRow>
                  <Tools items="block" size={13} />
                  <CaretBox $w={4} />
                </SideRow>
                <Tools items="eye1 eyeA eyeB eyeC eyeD slabHalf" size={14} />
              </SideTools>
              <Viewport>
                <svg width="60" height="60" viewBox="0 0 60 60" role="img" aria-label="Axes">
                  <path d="M9 50V30" stroke="#2fc62f" />
                  <path d="M7 31l2-13 2 13z" fill="#35c735" />
                  <path d="M9 50h30" stroke="#d92525" />
                  <path d="M28 48l12 2-12 2z" fill="#d92525" />
                  <circle cx="9" cy="50" r="2" fill="#2430e0" />
                  <g fill="#fff" fontFamily="Open Sans, sans-serif" fontSize="9">
                    <text x="9" y="12">Y</text>
                    <text x="9" y="50">Z</text>
                    <text x="47" y="50">X</text>
                  </g>
                </svg>
              </Viewport>
            </Stage>
            <Bar $h={21} $start={1}>
              <Grip />
              <Tools items="contourMix+" />
              <Grip $w={8} />
              <Tools items="wheel cubeTint" />
              <ColorSelect aria-label="Color by"><option>By Comp</option></ColorSelect>
              <SelectEdge />
              <Tools items="cubeWire+ cubeSolid+ cubes mirror greenBlocks" caret={5} />
              <Grip $w={7} />
              <Tools items="contour contour2 deform iso3 beam arrowLoad stripesCut trace vec tableIcon run cross pipe" />
              <Grip />
              <Tools items="note bubble swoosh stack plot" />
              <Grip $w={8} />
              <Tools items="ballMenu+ ballFirst ballRew ballPlay ballFwd ballLast" caret={5} />
              <Sliders>
                <Range type="range" aria-label="Animation start" defaultValue={0} />
                <Range type="range" aria-label="Animation end" defaultValue={100} />
              </Sliders>
              <Tools items="ballGear" w={18} />
            </Bar>
            <Panel>
              <PanelTitle>Load model and results:</PanelTitle>
              <LoadRow>
                <Check type="checkbox" id="lm" defaultChecked />
                <LoadLabel htmlFor="lm">Load model</LoadLabel>
                <IconButton type="button" aria-label="Browse model"><Icon name="folder" size={9} /></IconButton>
                <PathInput aria-label="Model file" />
                <RowEnd>
                  <Check type="checkbox" id="ov" />
                  <label htmlFor="ov">Overlay</label>
                </RowEnd>
              </LoadRow>
              <LoadRow>
                <Check type="checkbox" id="lr" defaultChecked />
                <LoadLabel htmlFor="lr">Load results</LoadLabel>
                <IconButton type="button" aria-label="Browse results"><Icon name="folder" size={9} /></IconButton>
                <PathInput aria-label="Results file" />
                <RowEnd><Icon name="map" size={10} /></RowEnd>
              </LoadRow>
              <Spacer />
              <ActionRow>
                <TemplateLabel htmlFor="tpl">Result-Math template:</TemplateLabel>
                <Cut>
                  <TemplateSelect id="tpl"><option>Standard</option></TemplateSelect>
                  <PushButton type="button" $w={72}>Reader Options...</PushButton>
                  <PushButton type="button" $w={55}>Apply</PushButton>
                </Cut>
              </ActionRow>
            </Panel>
          </Work>
        </Main>

        <StatusBar>Ready</StatusBar>
        <DesktopEdge />
        <Watermark>微信公众号：安装软件指南</Watermark>
      </Page>
    </>
  );
}
